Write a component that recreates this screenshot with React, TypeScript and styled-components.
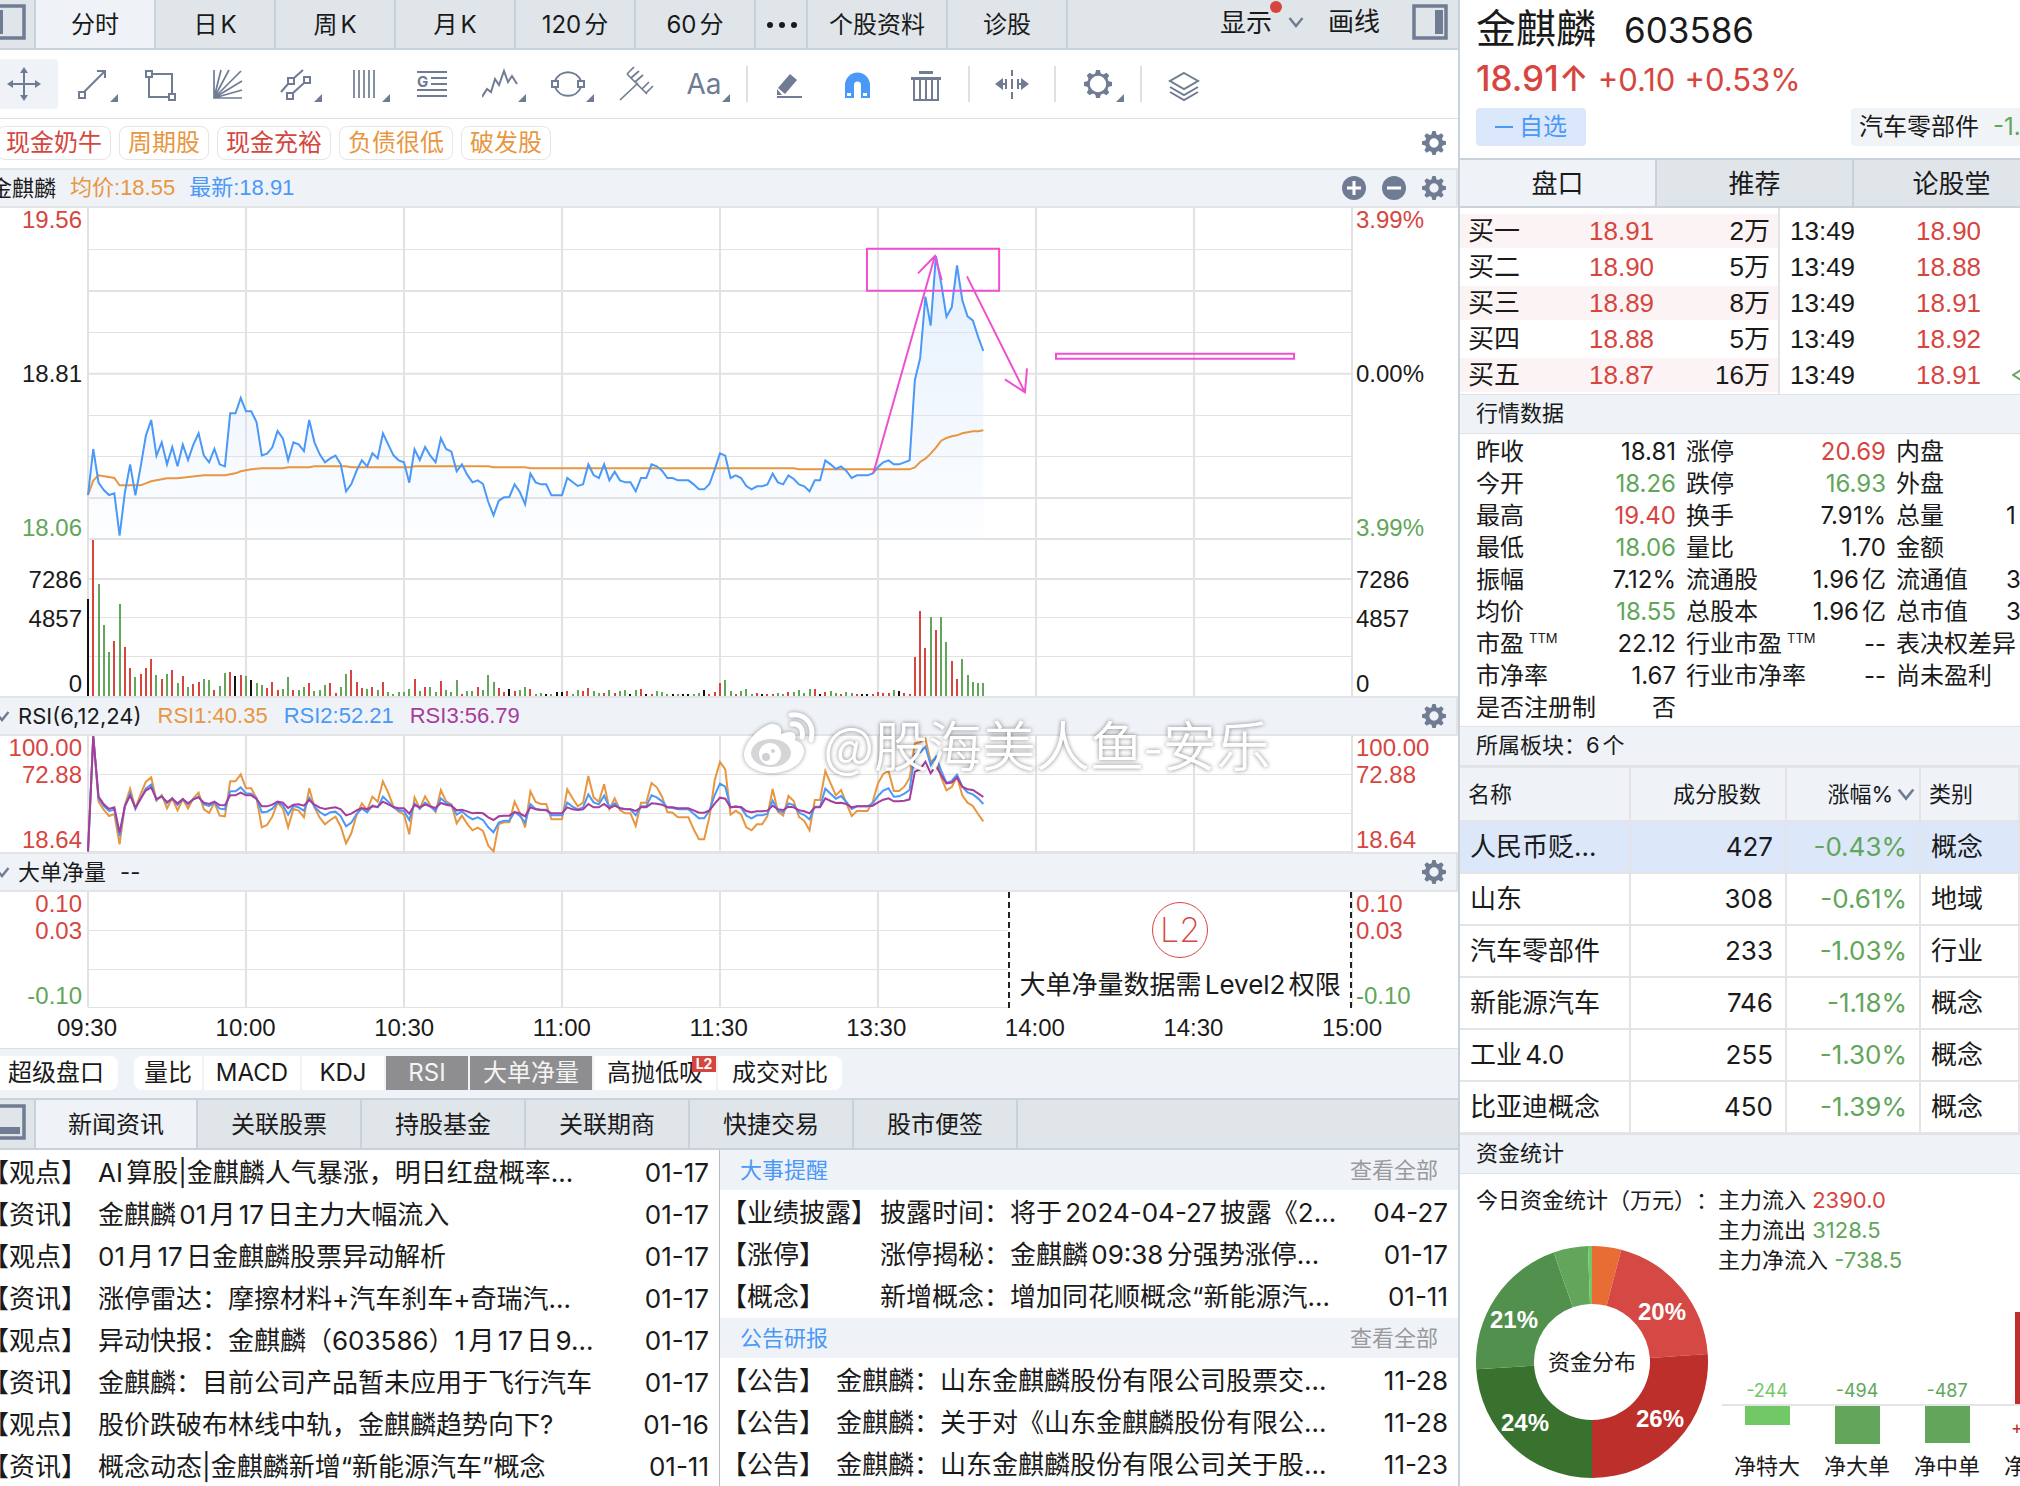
import React from "react";
import styled, { createGlobalStyle, css } from "styled-components";

const color = {
  ink: "#1a1a1a",
  red: "#d6463f",
  green: "#61a659",
  orange: "#e8963f",
  blue: "#4a98f7",
  purple: "#a63c9b",
  pink: "#f050cf",
  icon: "#6f7c93",
  bar: "#e0e5ea",
  active: "#eff3f7",
  strip: "#eff3f8",
  edge: "#c9d1db",
  line: "#e4e4e6",
  grid: "#e2e2e2",
};

const ui = `Inter, "Noto Sans CJK SC", sans-serif`;
const numeric = `"Liberation Sans", "Noto Sans CJK SC", sans-serif`;

const GlobalStyle = createGlobalStyle`
  *, *::before, *::after { box-sizing: border-box; }
  body {
    margin: 0;
    background: #fff;
    color: ${color.ink};
    font: 24px/32px ${ui};
    text-autospace: normal;
    text-spacing-trim: space-all;
  }
  button { font: inherit; color: inherit; border: 0; margin: 0; padding: 0; background: none; cursor: pointer; }
  a { color: inherit; text-decoration: none; }
  p, h1, h2, ul, dl, dd { margin: 0; padding: 0; font-weight: 400; }
  ul { list-style: none; }
  svg { display: block; flex: none; }
`;

/* ---------- data ---------- */

const PRICE = [
  885, 747, 848, 870, 885, 880, 1007, 878, 793, 886, 800, 706, 660, 767, 727, 793, 741, 799, 734, 780, 734, 700, 767,
  787, 747, 793, 799, 640, 640, 594, 634, 634, 666, 766, 761, 742, 693, 715, 781, 727, 733, 753, 660, 727, 763, 787,
  775, 767, 793, 874, 852, 812, 781, 799, 760, 775, 700, 733, 766, 781, 787, 848, 748, 780, 741, 767, 787, 715, 747,
  755, 814, 793, 824, 847, 841, 852, 906, 946, 902, 892, 891, 853, 876, 913, 821, 847, 853, 853, 886, 886, 886, 834,
  846, 858, 853, 793, 825, 834, 793, 841, 815, 841, 847, 847, 874, 834, 834, 793, 799, 812, 834, 834, 841, 841, 841,
  853, 868, 868, 852, 808, 760, 767, 834, 826, 834, 858, 868, 859, 859, 853, 821, 847, 853, 826, 837, 853, 859, 874,
  841, 841, 781, 793, 807, 799, 813, 834, 826, 826, 826, 820, 801, 787, 781, 793, 793, 787, 781, 540, 475, 290, 377,
  168, 250, 350, 322, 196, 300, 349, 361, 410, 453,
];

const AVERAGE: [number, number][] = [
  [0, 885], [1, 842], [2, 826], [5, 834], [6, 856], [10, 856], [12, 844], [15, 835], [17, 835], [22, 826], [26, 826],
  [28, 820], [29, 814], [31, 808], [33, 805], [37, 805], [38, 802], [42, 802], [43, 799], [49, 799], [50, 802],
  [61, 802], [62, 799], [76, 799], [77, 802], [83, 802], [84, 805], [134, 805], [135, 808], [156, 808], [157, 802],
  [158, 786], [159, 776], [160, 761], [161, 743], [162, 722], [163, 714], [164, 709], [165, 706], [166, 700],
  [168, 694], [169, 694], [170, 691],
];

const VOLUME = (
  "K97 R156 G112 G71 G44 R55 G92 R49 R28 G19 R22 R28 R37 G21 R17 G22 R26 G13 R20 G9 R12 R14 G17 G16 R6 G10 G23 R24 " +
  "K20 R21 G20 K16 G13 G11 R8 R14 R6 G7 G19 R6 G6 G9 R13 G5 G6 G11 R13 R3 G9 G22 R26 R14 R8 G7 R9 G6 R14 G4 G2 G4 " +
  "G4 G7 R17 G5 R9 G9 G4 R15 G6 G4 G16 R2 G5 G5 R9 G6 G21 G14 R8 R4 K7 R5 G6 G9 R7 G2 G3 K2 G2 K4 K4 R5 G2 G6 R5 " +
  "R8 G5 G3 R3 G6 R3 G5 G6 K2 G6 R7 K2 R2 G5 G4 G2 K2 G2 K2 K2 G2 G3 K6 R2 R4 R13 G16 G5 R2 G5 G7 G2 R3 K2 R2 R2 " +
  "G3 G2 R4 G4 G6 G3 G7 R7 K2 R4 G5 G3 R2 G4 G3 R2 K2 K2 R2 R4 R3 R3 G6 K5 R3 R2 R39 R85 R48 G79 R66 G79 G54 R35 " +
  "R17 G37 G21 G14 G13 G13"
)
  .split(" ")
  .map((s) => ({ tone: s[0], size: Number(s.slice(1)) }));

const RSI_6 = [
  484, 140, 335, 360, 378, 372, 463, 345, 296, 355, 312, 275, 262, 332, 315, 355, 325, 361, 328, 355, 325, 308, 358,
  369, 338, 377, 379, 274, 274, 253, 295, 295, 325, 412, 405, 380, 338, 355, 412, 357, 362, 382, 295, 352, 383, 403,
  390, 380, 410, 460, 430, 375, 340, 360, 320, 335, 274, 308, 350, 365, 373, 433, 322, 355, 319, 346, 366, 300, 334,
  343, 400, 377, 402, 421, 413, 423, 467, 484, 402, 397, 397, 335, 369, 412, 304, 336, 342, 342, 388, 388, 388, 298,
  325, 349, 338, 258, 322, 335, 283, 357, 325, 360, 370, 370, 408, 338, 338, 279, 292, 320, 366, 368, 382, 382, 382,
  418, 448, 448, 380, 270, 216, 238, 374, 362, 373, 412, 421, 403, 403, 378, 297, 365, 377, 318, 333, 381, 393, 421,
  330, 330, 243, 280, 316, 300, 340, 378, 363, 363, 363, 335, 280, 252, 243, 303, 303, 290, 264, 160, 157, 146, 215,
  205, 262, 301, 291, 260, 316, 338, 348, 372, 394,
];

const RSI_12 = [
  484, 140, 325, 348, 363, 359, 438, 350, 310, 357, 325, 295, 284, 330, 318, 340, 325, 345, 328, 343, 327, 320, 343,
  348, 338, 356, 358, 304, 304, 292, 310, 311, 325, 367, 365, 356, 338, 345, 374, 348, 352, 362, 323, 350, 366, 376,
  367, 365, 379, 409, 398, 372, 356, 367, 346, 352, 320, 335, 352, 361, 363, 390, 340, 356, 338, 350, 362, 325, 339,
  345, 374, 364, 378, 388, 382, 390, 412, 427, 398, 392, 392, 366, 378, 398, 342, 357, 359, 359, 376, 376, 376, 338,
  350, 358, 352, 313, 337, 343, 317, 352, 340, 355, 358, 358, 376, 349, 349, 316, 322, 334, 352, 354, 358, 358, 358,
  371, 385, 385, 362, 315, 281, 290, 352, 349, 353, 377, 385, 376, 376, 371, 332, 362, 367, 340, 345, 368, 375, 388,
  350, 350, 296, 311, 326, 318, 336, 357, 349, 349, 349, 340, 318, 302, 295, 320, 319, 311, 300, 192, 187, 170, 225,
  200, 242, 279, 273, 254, 290, 307, 313, 325, 342,
];

const RSI_24 = [
  484, 138, 320, 343, 357, 352, 428, 348, 317, 353, 326, 301, 293, 327, 320, 336, 326, 340, 327, 340, 328, 322, 338,
  342, 335, 345, 346, 316, 316, 308, 316, 316, 327, 349, 349, 344, 335, 338, 354, 344, 343, 347, 330, 344, 353, 357,
  354, 352, 358, 376, 371, 361, 354, 358, 349, 351, 335, 343, 351, 355, 355, 371, 345, 352, 344, 349, 354, 339, 344,
  347, 361, 359, 364, 370, 368, 370, 382, 390, 379, 377, 377, 366, 370, 379, 352, 358, 360, 361, 370, 370, 370, 352,
  358, 360, 358, 342, 352, 352, 342, 355, 347, 355, 357, 358, 363, 352, 352, 340, 341, 344, 352, 352, 355, 355, 355,
  361, 368, 368, 361, 341, 323, 326, 352, 350, 351, 363, 367, 364, 364, 362, 347, 358, 360, 350, 352, 361, 364, 370,
  352, 352, 325, 333, 339, 338, 342, 352, 349, 349, 349, 347, 337, 329, 325, 334, 334, 332, 328, 245, 238, 215, 250,
  227, 256, 280, 278, 262, 290, 298, 300, 310, 321,
];

const path = (values: number[]) => values.map((y, x) => `${x},${y}`).join(" ");

/* ---------- icons ---------- */

const stroke = { fill: "none", stroke: "currentColor", strokeWidth: 2 } as const;

const Glyph = ({ children, size = 36 }: { children: React.ReactNode; size?: number }) => (
  <svg width={size} height={size} viewBox="0 0 36 36" aria-hidden="true">
    {children}
  </svg>
);

const Gear = ({ light, size = 24 }: { light?: boolean; size?: number }) => (
  <svg width={size} height={size} viewBox="-14 -14 28 28" aria-hidden="true">
    {[0, 45, 90, 135, 180, 225, 270, 315].map((a) => (
      <path key={a} d="M-3.2 -9 L-1.9 -14 H1.9 L3.2 -9Z" fill="currentColor" transform={`rotate(${a})`} />
    ))}
    <circle r={light ? 9.5 : 8} fill="none" stroke="currentColor" strokeWidth={light ? 2.6 : 5.2} />
  </svg>
);

const Chevron = ({ width = 16 }: { width?: number }) => (
  <svg width={width} height={width} viewBox="0 0 16 16" aria-hidden="true">
    <path d="M1.5 4 8 12 14.5 4" fill="none" stroke={color.icon} strokeWidth="2.4" />
  </svg>
);

const PanelIcon = ({ side }: { side: "left" | "right" | "bottom" }) => (
  <Glyph>
    <rect x="2" y="2" width="32" height="32" fill="none" stroke={color.icon} strokeWidth="3.5" />
    {side === "left" && <rect x="6" y="6" width="7" height="24" fill={color.icon} />}
    {side === "right" && <rect x="23" y="6" width="8" height="24" fill={color.icon} />}
    {side === "bottom" && <rect x="6" y="23" width="24" height="7" fill={color.icon} />}
  </Glyph>
);

const RoundSign = ({ plus }: { plus?: boolean }) => (
  <svg width="24" height="24" viewBox="0 0 24 24" aria-hidden="true">
    <circle cx="12" cy="12" r="12" fill={color.icon} />
    <path d={plus ? "M5 12h14M12 5v14" : "M5 12h14"} stroke="#fff" strokeWidth="3" />
  </svg>
);

const tools: Record<string, React.ReactNode> = {
  move: (
    <>
      <path d="M4 18h28M18 4v28" {...stroke} />
      <path d="M18 1l4 6h-8zM18 35l4-6h-8zM1 18l6-4v8zM35 18l-6-4v8z" fill="currentColor" />
    </>
  ),
  trend: <path d="M5 26h6v6H5zM10 26 31 5M23 5h8v7" {...stroke} />,
  box: <path d="M4 5h6v6H4zM27 28h6v6h-6zM10 8h20v20M7 11v20h20" {...stroke} />,
  fan: <path d="M4 4v28h28M4 32 11 4M4 32 19 4M4 32 31 5M4 32 32 15M4 32l28-8" {...stroke} strokeWidth={1.7} />,
  channel: <path d="M3 26l7-8M16 12l9-8M10 12h6v6h-6zM26 11h6v6h-6zM9 27h6v6H9zM15 27l11-10" {...stroke} />,
  columns: <path d="M8 4v28M13 4v28M18 4v28M23 4v28M28 4v28" {...stroke} strokeWidth={1.7} />,
  notes: (
    <>
      <path d="M3 6h30M17 12h16M17 18h16M3 24h30M3 30h30" {...stroke} />
      <text x="3" y="21" fontSize="15" fontWeight="700" fontFamily="Inter" fill="currentColor">
        G
      </text>
    </>
  ),
  wave: <path d="M0 31l5-8 4 3 4-13 4 6 5-14 4 11 4-6 5 8" {...stroke} />,
  ellipse: (
    <path d="M5 15a14 14 0 0 1 26 0M5 21a14 14 0 0 0 26 0M2 15h6v6H2zM28 15h6v6h-6z" {...stroke} />
  ),
  fork: <path d="M2 34 20 17M9 8l20 20M9 8l7-7M13 12l8-7M17 16l8-7M24 23l7-7M28 27l7-7" {...stroke} strokeWidth={1.7} />,
  pen: (
    <>
      <path d="M18 8l7 6-12 14-7-6zM5 23l5 6H5z" fill="currentColor" />
      <path d="M5 31h25" {...stroke} />
    </>
  ),
  magnet: (
    <>
      <path d="M5 32V19a12.500 12.500 0 0 1 25 0v13h-9V19a3.500 3.500 0 0 0-7 0v13z" fill={color.blue} />
      <path d="M7 27h4v3H7zM23 27h4v3h-4z" fill="#fff" />
    </>
  ),
  trash: (
    <>
      <path d="M11 5h14v3H11zM3 11h30v3H3z" fill="currentColor" />
      <path d="M6 14v20h24V14M12 14v20M18 14v20M24 14v20" {...stroke} />
    </>
  ),
  align: (
    <>
      <path d="M18 4v6M18 13v10M18 26v7M8 18h5M23 18h5M12 13v10M24 13v10" {...stroke} />
      <path d="M1 18l8-6v12zM35 18l-8-6v12z" fill="currentColor" />
    </>
  ),
  layers: <path d="M18 7l14 8-14 8-14-8zM4 21l14 8 14-8M4 26l14 8 14-8" {...stroke} />,
};

const WeiboMark = () => (
  <svg width="72" height="62" viewBox="0 0 72 62" aria-hidden="true">
    <path
      d="M30 12c-6-3-30 15-30 31 0 12 14 18 28 18 18 0 32-10 32-22 0-7-6-10-9-11 2-6-1-11-14-6 1-5-1-9-7-10z"
      fill="#fff"
    />
    <ellipse cx="27" cy="41" rx="20" ry="14" fill="#d5d5d8" />
    <circle cx="26" cy="42" r="11" fill="#fff" />
    <circle cx="22" cy="45" r="4" fill="#d0d0d4" />
    <circle cx="29" cy="39" r="2" fill="#d0d0d4" />
    <path d="M47 3c14-2 24 9 20 25M48 12c7-1 12 5 10 13" fill="none" stroke="#fff" strokeWidth="5" strokeLinecap="round" />
  </svg>
);

/* ---------- shell ---------- */

const Shell = styled.div`
  display: grid;
  grid-template-columns: minmax(0, 73fr) minmax(0, 28fr);
  grid-template-rows: minmax(0, 1fr);
  height: 100vh;
  overflow: hidden;
`;

const Main = styled.main`
  display: flex;
  flex-direction: column;
  overflow: hidden;
  border-right: 2px solid ${color.edge};
`;

const Side = styled.aside`
  display: flex;
  flex-direction: column;
  overflow: hidden;
`;

const TabBar = styled.nav<{ $top?: boolean }>`
  display: flex;
  flex: none;
  overflow: hidden;
  background: ${color.bar};
  border-bottom: 2px solid ${color.edge};
  ${(p) => p.$top && `border-top: 2px solid ${color.edge};`}
`;

const Tab = styled.button<{ $width: number; $active?: boolean; $large?: boolean }>`
  flex: none;
  width: ${(p) => p.$width}px;
  height: ${(p) => (p.$large ? 46 : 48)}px;
  padding-top: 2px;
  font-size: ${(p) => (p.$large ? 26 : 24)}px;
  border-right: 2px solid ${color.edge};
  background: ${(p) => (p.$active ? color.active : "transparent")};
  white-space: nowrap;
`;

const PanelToggle = styled.button`
  display: flex;
  align-items: center;
  justify-content: flex-end;
  flex: none;
  width: 36px;
  height: 48px;
  padding-right: 8px;
  padding-bottom: 4px;
  border-right: 2px solid ${color.edge};
`;

const BarActions = styled.div`
  display: flex;
  align-items: center;
  margin-left: auto;
  padding: 0 10px 4px 0;
  font-size: 26px;

  > * + * {
    margin-left: 24px;
  }
  > :last-child {
    margin-left: 32px;
  }
`;

const DisplayMenu = styled.button`
  display: flex;
  align-items: center;
  gap: 16px;
  position: relative;

  &::after {
    content: "";
    position: absolute;
    left: 50px;
    top: -4px;
    width: 12px;
    height: 12px;
    border-radius: 50%;
    background: ${color.red};
  }
`;

const BarLabel = styled.span`
  padding-top: 2px;
`;

/* ---------- tools ---------- */

const ToolRow = styled.div`
  display: flex;
  align-items: center;
  flex: none;
  height: 69px;
  margin-left: -10px;
  border-bottom: 1px solid #e0e0e0;
`;

const Tool = styled.button<{ $on?: boolean; $more?: boolean }>`
  display: flex;
  align-items: center;
  justify-content: center;
  flex: none;
  position: relative;
  width: 68px;
  height: 50px;
  border-radius: 4px;
  color: ${color.icon};
  font-size: 28px;
  background: ${(p) => (p.$on ? color.active : "transparent")};
  ${(p) =>
    p.$more &&
    css`
      &::after {
        content: "";
        position: absolute;
        right: 8px;
        bottom: 7px;
        border: 4px solid transparent;
        border-right-color: ${color.icon};
        border-bottom-color: ${color.icon};
      }
    `}
`;

const ToolDivider = styled.span`
  flex: none;
  width: 2px;
  height: 36px;
  margin: 0 8px;
  background: #e0e0e0;
`;

const TagRow = styled.div`
  display: flex;
  align-items: center;
  gap: 8px;
  flex: none;
  height: 51px;
  padding: 0 12px 2px 0;
  border-bottom: 2px solid #e5e5e5;
`;

const Tag = styled.a<{ $tone: string }>`
  flex: none;
  height: 34px;
  padding: 0 8px;
  border: 1px solid #e6e6e6;
  border-radius: 8px;
  line-height: 32px;
  color: ${(p) => p.$tone};

  &:first-child {
    margin-left: -3px;
  }
`;

const IconButton = styled.button`
  display: flex;
  flex: none;
  color: ${color.icon};
`;

const Push = styled.div`
  display: flex;
  gap: 16px;
  margin-left: auto;
`;

/* ---------- charts ---------- */

const PaneHeader = styled.header<{ $inset: number; $gap: number }>`
  display: flex;
  align-items: center;
  gap: ${(p) => p.$gap}px;
  flex: none;
  height: 38px;
  padding: 0 10px 0 0;
  background: ${color.strip};
  border-bottom: 2px solid #e3e4e6;
  border-right: 2px solid #e3e4e6;
  font-size: 22px;
  line-height: 32px;
  white-space: nowrap;

  > :first-child {
    margin-left: ${(p) => p.$inset}px;
  }
`;

const PaneTitle = styled.span`
  display: flex;
  align-items: center;
  gap: 8px;
`;

const Reading = styled.span<{ $tone: string }>`
  font-family: ${numeric};
  text-autospace: no-autospace;
  color: ${(p) => p.$tone};
`;

const Pane = styled.section<{ $height: number; $line?: boolean }>`
  display: grid;
  grid-template-columns: 88px minmax(0, 1fr) 106px;
  grid-template-rows: minmax(0, 1fr);
  flex: none;
  height: ${(p) => p.$height}px;
  ${(p) => p.$line && "border-bottom: 2px solid #e3e4e6;"}
`;

const PaneGroup = styled.div`
  flex: none;
  position: relative;
`;

const Plot = styled.div`
  position: relative;
  min-width: 0;
  min-height: 0;

  > svg {
    width: 100%;
    height: 100%;
    overflow: visible;
  }
`;

const Axis = styled.div<{ $end?: boolean }>`
  display: flex;
  flex-direction: column;
  padding: ${(p) => (p.$end ? "0 0 0 4px" : "0 6px 0 0")};
  text-align: ${(p) => (p.$end ? "left" : "right")};
  font: 24px/24px ${numeric};
`;

const Scale = styled.div<{ $kind: "price" | "volume" | "sub" }>`
  display: flex;
  flex-direction: column;
  ${(p) => p.$kind === "price" && "height: 332px; justify-content: space-between;"}
  ${(p) => p.$kind === "volume" && "flex: 1; padding-top: 28px; gap: 15px;"}
  ${(p) => p.$kind === "sub" && "flex: 1; gap: 3px;"}

  > :last-child {
    margin-top: ${(p) => (p.$kind === "price" ? "0" : "auto")};
  }
`;

const Mark = styled.span<{ $tone?: string }>`
  color: ${(p) => p.$tone ?? color.ink};
`;

const TimeAxis = styled.div`
  display: flex;
  align-items: center;
  justify-content: space-between;
  flex: none;
  height: 41px;
  padding: 0 76px 0 57px;
  border-bottom: 1px solid #e0e0e0;
  font: 24px/40px ${numeric};
`;

const LockedArea = styled.div`
  position: absolute;
  top: 0;
  right: 0;
  bottom: 0;
  display: flex;
  flex-direction: column;
  align-items: center;
  gap: 10px;
  width: 27.2%;
  padding-top: 10px;
  background: #fff;
  border-left: 2px dashed #222;
  border-right: 2px dashed #222;
  font-size: 26px;
  line-height: 34px;
  white-space: nowrap;
`;

const LevelMark = styled.span`
  width: 56px;
  height: 56px;
  border: 1px solid ${color.red};
  border-radius: 50%;
  color: ${color.red};
  font-size: 34px;
  font-weight: 200;
  line-height: 54px;
  text-align: center;
`;

const Watermark = styled.div`
  position: absolute;
  left: 51%;
  top: 14px;
  display: flex;
  gap: 8px;
  color: #fff;
  font: 350 54px/64px "Noto Sans CJK SC", sans-serif;
  white-space: nowrap;
  text-shadow: 0 0 4px rgba(0, 0, 0, 0.5);
  pointer-events: none;

  svg {
    filter: drop-shadow(0 0 2px rgba(0, 0, 0, 0.4));
  }
`;

const IndicatorBar = styled.div`
  display: flex;
  gap: 2px;
  flex: none;
  height: 49px;
  padding-top: 7px;
  background: ${color.strip};
`;

const Indicator = styled.button<{ $width: number; $on?: boolean; $first?: boolean; $last?: boolean }>`
  flex: none;
  position: relative;
  width: ${(p) => p.$width}px;
  height: 34px;
  line-height: 34px;
  color: ${(p) => (p.$on ? "#f4f4f4" : color.ink)};
  background: ${(p) => (p.$on ? "#8e8e91" : "#fff")};
  border-radius: ${(p) => `${p.$first ? 8 : 0}px ${p.$last ? 8 : 0}px ${p.$last ? 8 : 0}px ${p.$first ? 8 : 0}px`};

  &:first-child {
    margin: 0 14px 0 -6px;
  }
`;

const Badge = styled.span`
  position: absolute;
  top: 0;
  right: 0;
  width: 24px;
  height: 16px;
  background: ${color.red};
  color: #fff;
  font-size: 14px;
  font-weight: 700;
  line-height: 16px;
`;

/* ---------- news ---------- */

const News = styled.div`
  display: grid;
  grid-template-columns: minmax(0, 360fr) minmax(0, 369fr);
  flex: 1;
  min-height: 0;
  overflow: hidden;
`;

const NewsColumn = styled.section<{ $ruled?: boolean }>`
  overflow: hidden;
  ${(p) => p.$ruled && "border-right: 1px solid #b9bcc2;"}
`;

const NewsList = styled.ul<{ $inset: number; $label: number }>`
  padding: 2px 10px 0 0;
  margin-left: ${(p) => p.$inset}px;
  font-size: 26px;
  line-height: 42px;

  a {
    display: grid;
    grid-template-columns: ${(p) => p.$label}px minmax(0, 1fr) auto;
    white-space: nowrap;
  }
`;

const NewsHead = styled.header`
  display: flex;
  justify-content: space-between;
  height: 40px;
  padding: 0 20px;
  background: ${color.strip};
  font-size: 22px;
  line-height: 40px;

  h2 {
    font-size: 22px;
    color: ${color.blue};
  }

  a {
    color: #9a9a9c;
  }
`;

/* ---------- side panel ---------- */

const Quote = styled.header`
  flex: none;
  height: 160px;
  padding-left: 16px;
  overflow: hidden;
  border-bottom: 2px solid ${color.edge};
  white-space: nowrap;
`;

const QuoteName = styled.h1`
  display: flex;
  align-items: baseline;
  gap: 28px;
  height: 56px;
  font-size: 40px;
  line-height: 58px;

  span {
    font-size: 35px;
  }
`;

const QuotePrice = styled.p`
  display: flex;
  align-items: baseline;
  gap: 9px;
  height: 52px;
  color: ${color.red};
  font-size: 31px;
  line-height: 44px;

  strong {
    font-size: 35px;
    font-weight: 450;
  }
`;

const QuoteActions = styled.div`
  display: flex;
  justify-content: space-between;
`;

const WatchButton = styled.button`
  display: flex;
  align-items: center;
  justify-content: center;
  gap: 6px;
  width: 110px;
  height: 38px;
  border-radius: 4px;
  background: #dbe8fb;
  color: ${color.blue};
`;

const Sector = styled.a`
  display: flex;
  gap: 14px;
  width: 169px;
  height: 38px;
  padding-left: 8px;
  overflow: hidden;
  border-radius: 4px 0 0 4px;
  background: #f1f4f7;
  line-height: 38px;

  span {
    color: ${color.green};
  }
`;

const Orders = styled.section`
  display: grid;
  grid-template-columns: 318px minmax(0, 1fr);
  flex: none;
  font: 26px/34px ${numeric};
  text-autospace: no-autospace;
`;

const OrderTable = styled.table<{ $tint?: boolean }>`
  width: 100%;
  margin-top: 6px;
  border-collapse: collapse;
  table-layout: fixed;

  td {
    height: 36px;
    padding: 0 0 2px;
    overflow: hidden;
    white-space: nowrap;
  }

  ${(p) =>
    p.$tint &&
    css`
      tr:nth-child(odd) {
        background: linear-gradient(#fcf4f4 34px, #fff 34px);
      }
      td:first-child {
        padding-left: 8px;
      }
      td:last-child {
        padding-right: 8px;
        text-align: right;
      }
    `}
`;

const Trades = styled.div`
  display: flex;
  padding-left: 10px;
  border-left: 2px solid ${color.line};
`;

const Rise = styled.span`
  color: ${color.red};
`;

const SectionTitle = styled.h2`
  flex: none;
  height: 40px;
  padding-left: 16px;
  background: ${color.strip};
  border-top: 1px solid #dfe2e6;
  border-bottom: 1px solid #dfe2e6;
  font-size: 22px;
  line-height: 36px;
`;

const Stats = styled.dl`
  display: grid;
  grid-template-columns: repeat(3, 200px);
  gap: 0 10px;
  flex: none;
  height: 292px;
  padding: 2px 0 2px 16px;
  overflow: hidden;
  white-space: nowrap;
`;

const Stat = styled.div<{ $clipped?: boolean }>`
  display: flex;
  justify-content: ${(p) => (p.$clipped ? "flex-start" : "space-between")};
  height: 32px;

  dt {
    min-width: ${(p) => (p.$clipped ? 110 : 0)}px;
  }

  sup {
    margin-left: 2px;
    font-size: 13px;
    line-height: 13px;
    vertical-align: 9px;
  }
`;

const StatValue = styled.dd<{ $tone?: string }>`
  color: ${(p) => p.$tone ?? color.ink};
`;

const Boards = styled.table`
  flex: none;
  border-collapse: collapse;
  table-layout: fixed;
  width: 100%;
  border-top: 2px solid ${color.line};
  font-size: 26px;

  th {
    height: 54px;
    padding: 0 8px;
    background: ${color.strip};
    border-bottom: 2px solid ${color.line};
    border-right: 2px solid ${color.line};
    font-size: 22px;
    font-weight: 400;
    text-align: left;
  }
  th:nth-child(2) {
    padding-right: 24px;
    text-align: right;
  }
  th:nth-child(3) {
    padding-right: 4px;
  }
  td {
    height: 52px;
    padding: 0 10px;
    border-bottom: 2px solid ${color.line};
    border-right: 2px solid ${color.line};
    white-space: nowrap;
  }
  td:nth-child(2),
  td:nth-child(3) {
    padding-right: 12px;
    text-align: right;
  }
  td:nth-child(3) {
    color: ${color.green};
  }
  tbody tr:first-child {
    background: #dce8fa;
  }
`;

const SortButton = styled.button`
  display: flex;
  align-items: center;
  justify-content: flex-end;
  gap: 4px;
  width: 100%;
`;

const Funds = styled.section`
  flex: none;
  padding: 11px 0 0 16px;
  overflow: hidden;
  font-size: 22px;
  line-height: 30px;
  white-space: nowrap;
`;

const FundGrid = styled.div`
  display: grid;
  grid-template-columns: 242px minmax(0, 1fr);

  > svg {
    margin-top: 31px;
  }
`;

const FundValue = styled.span<{ $tone: string }>`
  color: ${(p) => p.$tone};
`;

const FlowChart = styled.div`
  display: flex;
  margin-left: 4px;
  overflow: hidden;
`;

const FlowColumn = styled.div`
  flex: none;
  width: 90px;
  text-align: center;
`;

const FlowHalf = styled.div<{ $upper?: boolean; $tone: string }>`
  display: flex;
  flex-direction: column;
  align-items: center;
  justify-content: ${(p) => (p.$upper ? "flex-end" : "flex-start")};
  height: ${(p) => (p.$upper ? 131 : 45)}px;
  border-bottom: ${(p) => (p.$upper ? `2px solid ${color.line}` : "0")};
  color: ${(p) => p.$tone};
  font-size: 18px;
  line-height: 26px;
`;

const FlowBar = styled.span<{ $tone: string }>`
  width: 45px;
  background: ${(p) => p.$tone};
`;

const FlowNumber = styled.span<{ $below?: boolean }>`
  margin-top: ${(p) => (p.$below ? 10 : 0)}px;
`;

/* ---------- pieces ---------- */

const thin = { vectorEffect: "non-scaling-stroke" } as const;
const barTone: Record<string, string> = { K: "#111", R: color.red, G: color.green };

const GridLines = ({ rows, top, bottom }: { rows: number[]; top: number; bottom: number }) => (
  <g stroke={color.grid} strokeWidth="1.5" shapeRendering="crispEdges">
    {rows.map((y) => (
      <path key={y} d={`M0 ${y}H240`} {...thin} />
    ))}
    {[0, 30, 60, 90, 120, 150, 180, 210, 240].map((x) => (
      <path key={x} d={`M${x} ${top}V${bottom}`} {...thin} />
    ))}
  </g>
);

const PriceChart = () => (
  <svg viewBox="0 24 240 1464" preserveAspectRatio="none" role="img" aria-label="分时走势">
    <defs>
      <linearGradient id="fall" x1="0" y1="0" x2="0" y2="1">
        <stop offset="0" stopColor="#4a98f7" stopOpacity="0.15" />
        <stop offset="1" stopColor="#4a98f7" stopOpacity="0.01" />
      </linearGradient>
    </defs>
    <polygon points={`0,1017 ${path(PRICE)} 170,1017`} fill="url(#fall)" />
    <GridLines rows={[148, 273, 397, 646, 769, 894, 1017, 1137, 1252, 1369]} top={24} bottom={1488} />
    <path d="M0 521H240" stroke={color.grid} strokeWidth="2" {...thin} />
    <g strokeWidth="2" shapeRendering="crispEdges">
      {VOLUME.map((v, i) => (
        <path key={i} d={`M${i} 1488V${1488 - v.size * 3}`} stroke={barTone[v.tone]} {...thin} />
      ))}
    </g>
    <g fill="none" strokeWidth="2">
      <polyline points={AVERAGE.map((p) => p.join(",")).join(" ")} stroke={color.orange} {...thin} />
      <polyline points={path(PRICE)} stroke={color.blue} {...thin} />
      <g stroke={color.pink}>
        <path d="M147.900 146H173V272H147.900Z" {...thin} />
        <path d="M149.100 820 160.800 168M157.600 220 160.800 168 162.100 240" {...thin} />
        <path d="M166.900 229 177.900 577M174.100 538 177.900 577 178.300 505" {...thin} />
        <path d="M183.800 461H229V476H183.800Z" {...thin} />
      </g>
    </g>
  </svg>
);

const RsiChart = () => (
  <svg viewBox="0 138 240 348" preserveAspectRatio="none" role="img" aria-label="RSI">
    <GridLines rows={[253, 370, 484]} top={138} bottom={486} />
    <g fill="none" strokeWidth="2">
      <polyline points={path(RSI_6)} stroke={color.orange} {...thin} />
      <polyline points={path(RSI_12)} stroke={color.blue} {...thin} />
      <polyline points={path(RSI_24)} stroke={color.purple} {...thin} />
    </g>
  </svg>
);

const PriceAxis = ({ end }: { end?: boolean }) => (
  <Axis $end={end}>
    <Scale $kind="price">
      <Mark $tone={color.red}>{end ? "3.99%" : "19.56"}</Mark>
      <Mark>{end ? "0.00%" : "18.81"}</Mark>
      <Mark $tone={color.green}>{end ? "3.99%" : "18.06"}</Mark>
    </Scale>
    <Scale $kind="volume">
      <Mark>7286</Mark>
      <Mark>4857</Mark>
      <Mark>0</Mark>
    </Scale>
  </Axis>
);

const SubAxis = ({ end, marks, low }: { end?: boolean; marks: string[]; low: string }) => (
  <Axis $end={end}>
    <Scale $kind="sub">
      {marks.map((m, i) => (
        <Mark key={m} $tone={i === 2 ? low : color.red}>
          {m}
        </Mark>
      ))}
    </Scale>
  </Axis>
);

const SettingsButton = () => (
  <IconButton aria-label="设置">
    <Gear />
  </IconButton>
);

const slices: [number, number, string][] = [
  [0, 14.6, "#e86d35"],
  [14.6, 86, "#d54843"],
  [86, 180, "#bc2f2a"],
  [180, 266.4, "#38722e"],
  [266.4, 340.7, "#52914d"],
  [340.7, 358, "#62a65c"],
  [358, 360, "#72c866"],
];

const arc = (from: number, to: number) => {
  const at = (deg: number, r: number) => {
    const a = (deg * Math.PI) / 180;
    return `${(r * Math.sin(a)).toFixed(2)} ${(-r * Math.cos(a)).toFixed(2)}`;
  };
  return `M${at(from, 116)}A116 116 0 0 1 ${at(to, 116)}L${at(to, 58)}A58 58 0 0 0 ${at(from, 58)}Z`;
};

const Donut = () => (
  <svg width="232" height="232" viewBox="-116 -116 232 232" role="img" aria-label="资金分布">
    {slices.map(([from, to, fill]) => (
      <path key={from} d={arc(from, to)} fill={fill} />
    ))}
    <g fill="#fff" fontFamily="Liberation Sans" fontSize="24" fontWeight="700" textAnchor="middle">
      <text x="70" y="-42">20%</text>
      <text x="68" y="65">26%</text>
      <text x="-67" y="69">24%</text>
      <text x="-78" y="-34">21%</text>
    </g>
    <text y="8" fontSize="22" textAnchor="middle" fill={color.ink}>
      资金分布
    </text>
  </svg>
);

const flows = [
  { label: "净特大", value: "-244", size: 19, text: "#72c866", tone: "#72c866" },
  { label: "净大单", value: "-494", size: 38, text: color.green, tone: "#62a65c" },
  { label: "净中单", value: "-487", size: 37, text: color.green, tone: "#62a65c" },
  { label: "净小单", value: "+1225", size: 92, text: "#bc2f2a", tone: "#bc2f2a" },
];

const Flow = ({ label, value, size, text, tone }: (typeof flows)[number]) => {
  const bar = <FlowBar $tone={tone} style={{ height: size }} />;
  const up = value.startsWith("+");
  return (
    <FlowColumn>
      <FlowHalf $upper $tone={text}>
        {up ? bar : <FlowNumber>{value}</FlowNumber>}
      </FlowHalf>
      <FlowHalf $tone={text}>{up ? <FlowNumber $below>{value}</FlowNumber> : bar}</FlowHalf>
      {label}
    </FlowColumn>
  );
};

/* ---------- page content ---------- */

const toolbar: { id: string; more?: boolean }[] = [
  { id: "move" },
  { id: "trend", more: true },
  { id: "box" },
  { id: "fan" },
  { id: "channel", more: true },
  { id: "columns", more: true },
  { id: "notes" },
  { id: "wave", more: true },
  { id: "ellipse", more: true },
  { id: "fork" },
];

const tags: [string, string][] = [
  ["现金奶牛", color.red],
  ["周期股", color.orange],
  ["现金充裕", color.red],
  ["负债很低", color.orange],
  ["破发股", color.orange],
];

const latest = [
  ["【观点】", "AI算股|金麒麟人气暴涨，明日红盘概率...", "01-17"],
  ["【资讯】", "金麒麟01月17日主力大幅流入", "01-17"],
  ["【观点】", "01月17日金麒麟股票异动解析", "01-17"],
  ["【资讯】", "涨停雷达：摩擦材料+汽车刹车+奇瑞汽...", "01-17"],
  ["【观点】", "异动快报：金麒麟（603586）1月17日9...", "01-17"],
  ["【资讯】", "金麒麟：目前公司产品暂未应用于飞行汽车", "01-17"],
  ["【观点】", "股价跌破布林线中轨，金麒麟趋势向下?", "01-16"],
  ["【资讯】", "概念动态|金麒麟新增“新能源汽车”概念", "01-11"],
];

const events = [
  ["【业绩披露】", "披露时间：将于2024-04-27披露《2...", "04-27"],
  ["【涨停】", "涨停揭秘：金麒麟09:38分强势涨停...", "01-17"],
  ["【概念】", "新增概念：增加同花顺概念“新能源汽...", "01-11"],
];

const notices = [
  ["【公告】", "金麒麟：山东金麒麟股份有限公司股票交...", "11-28"],
  ["【公告】", "金麒麟：关于对《山东金麒麟股份有限公...", "11-28"],
  ["【公告】", "金麒麟：山东金麒麟股份有限公司关于股...", "11-23"],
];

const NewsItems = ({ items, inset, label }: { items: string[][]; inset: number; label: number }) => (
  <NewsList $inset={inset} $label={label}>
    {items.map(([kind, title, date]) => (
      <li key={title}>
        <a href="#news">
          <span>{kind}</span>
          <span>{title}</span>
          <time>{date}</time>
        </a>
      </li>
    ))}
  </NewsList>
);

const bids = [
  ["买一", "18.91", "2万"],
  ["买二", "18.90", "5万"],
  ["买三", "18.89", "8万"],
  ["买四", "18.88", "5万"],
  ["买五", "18.87", "16万"],
];

const trades = ["18.90", "18.88", "18.91", "18.92", "18.91"];

const stats: [string, string, string?][] = [
  ["昨收", "18.81"], ["涨停", "20.69", color.red], ["内盘", ""],
  ["今开", "18.26", color.green], ["跌停", "16.93", color.green], ["外盘", ""],
  ["最高", "19.40", color.red], ["换手", "7.91%"], ["总量", "1"],
  ["最低", "18.06", color.green], ["量比", "1.70"], ["金额", ""],
  ["振幅", "7.12%"], ["流通股", "1.96亿"], ["流通值", "3"],
  ["均价", "18.55", color.green], ["总股本", "1.96亿"], ["总市值", "3"],
  ["市盈TTM", "22.12"], ["行业市盈TTM", "--"], ["表决权差异", ""],
  ["市净率", "1.67"], ["行业市净率", "--"], ["尚未盈利", ""],
  ["是否注册制", "否"],
];

const boards = [
  ["人民币贬...", "427", "-0.43%", "概念"],
  ["山东", "308", "-0.61%", "地域"],
  ["汽车零部件", "233", "-1.03%", "行业"],
  ["新能源汽车", "746", "-1.18%", "概念"],
  ["工业4.0", "255", "-1.30%", "概念"],
  ["比亚迪概念", "450", "-1.39%", "概念"],
];

export default function App() {
  return (
    <Shell>
      <GlobalStyle />
      <Main>
        <TabBar>
          <PanelToggle aria-label="左侧栏">
            <PanelIcon side="left" />
          </PanelToggle>
          <Tab $width={120} $active>分时</Tab>
          <Tab $width={120}>日K</Tab>
          <Tab $width={120}>周K</Tab>
          <Tab $width={120}>月K</Tab>
          <Tab $width={120}>120分</Tab>
          <Tab $width={120}>60分</Tab>
          <Tab $width={52} aria-label="更多周期">
            <svg width="50" height="8" viewBox="0 0 50 8" aria-hidden="true">
              <g fill={color.ink}>
                <circle cx="14" cy="4" r="3" />
                <circle cx="26" cy="4" r="3" />
                <circle cx="38" cy="4" r="3" />
              </g>
            </svg>
          </Tab>
          <Tab $width={140}>个股资料</Tab>
          <Tab $width={120}>诊股</Tab>
          <BarActions>
            <DisplayMenu>
              <BarLabel>显示</BarLabel>
              <Chevron />
            </DisplayMenu>
            <button>
              <BarLabel>画线</BarLabel>
            </button>
            <IconButton aria-label="右侧栏">
              <PanelIcon side="right" />
            </IconButton>
          </BarActions>
        </TabBar>

        <ToolRow>
          {toolbar.map((t) => (
            <Tool key={t.id} $on={t.id === "move"} $more={t.more} aria-label={t.id}>
              <Glyph>{tools[t.id]}</Glyph>
            </Tool>
          ))}
          <Tool $more>Aa</Tool>
          <ToolDivider />
          {["pen", "magnet", "trash"].map((id) => (
            <Tool key={id} aria-label={id}>
              <Glyph>{tools[id]}</Glyph>
            </Tool>
          ))}
          <ToolDivider />
          <Tool aria-label="align">
            <Glyph>{tools.align}</Glyph>
          </Tool>
          <ToolDivider />
          <Tool $more aria-label="settings">
            <Gear light size={28} />
          </Tool>
          <ToolDivider />
          <Tool aria-label="layers">
            <Glyph>{tools.layers}</Glyph>
          </Tool>
        </ToolRow>

        <TagRow>
          {tags.map(([name, tone]) => (
            <Tag key={name} href="#tag" $tone={tone}>
              {name}
            </Tag>
          ))}
          <Push>
            <SettingsButton />
          </Push>
        </TagRow>

        <PaneHeader $inset={-10} $gap={14}>
          <span>金麒麟</span>
          <Reading $tone={color.orange}>均价:18.55</Reading>
          <Reading $tone={color.blue}>最新:18.91</Reading>
          <Push>
            <IconButton aria-label="放大">
              <RoundSign plus />
            </IconButton>
            <IconButton aria-label="缩小">
              <RoundSign />
            </IconButton>
            <SettingsButton />
          </Push>
        </PaneHeader>
        <Pane $height={490} $line>
          <PriceAxis />
          <Plot>
            <PriceChart />
          </Plot>
          <PriceAxis end />
        </Pane>

        <PaneGroup>
          <PaneHeader $inset={-6} $gap={16}>
            <PaneTitle>
              <Chevron />
              RSI(6,12,24)
            </PaneTitle>
            <Reading $tone={color.orange}>RSI1:40.35</Reading>
            <Reading $tone={color.blue}>RSI2:52.21</Reading>
            <Reading $tone={color.purple}>RSI3:56.79</Reading>
            <Push>
              <SettingsButton />
            </Push>
          </PaneHeader>
          <Pane $height={118} $line>
            <SubAxis marks={["100.00", "72.88", "18.64"]} low={color.red} />
            <Plot>
              <RsiChart />
            </Plot>
            <SubAxis end marks={["100.00", "72.88", "18.64"]} low={color.red} />
          </Pane>
          <Watermark>
            <WeiboMark />
            @股海美人鱼-安乐
          </Watermark>
        </PaneGroup>

        <PaneHeader $inset={-6} $gap={14}>
          <PaneTitle>
            <Chevron />
            大单净量
          </PaneTitle>
          <span>--</span>
          <Push>
            <SettingsButton />
          </Push>
        </PaneHeader>
        <Pane $height={116}>
          <SubAxis marks={["0.10", "0.03", "-0.10"]} low={color.green} />
          <Plot>
            <svg viewBox="0 0 240 348" preserveAspectRatio="none" aria-hidden="true">
              <GridLines rows={[115, 232, 346]} top={0} bottom={346} />
            </svg>
            <LockedArea>
              <LevelMark>L2</LevelMark>
              大单净量数据需Level2权限
            </LockedArea>
          </Plot>
          <SubAxis end marks={["0.10", "0.03", "-0.10"]} low={color.green} />
        </Pane>
        <TimeAxis>
          {["09:30", "10:00", "10:30", "11:00", "11:30", "13:30", "14:00", "14:30", "15:00"].map((t) => (
            <span key={t}>{t}</span>
          ))}
        </TimeAxis>

        <IndicatorBar>
          <Indicator $width={124} $first $last>超级盘口</Indicator>
          <Indicator $width={68} $first>量比</Indicator>
          <Indicator $width={96}>MACD</Indicator>
          <Indicator $width={82}>KDJ</Indicator>
          <Indicator $width={82} $on>RSI</Indicator>
          <Indicator $width={122} $on>大单净量</Indicator>
          <Indicator $width={122}>
            高抛低吸<Badge>L2</Badge>
          </Indicator>
          <Indicator $width={124} $last>成交对比</Indicator>
        </IndicatorBar>

        <TabBar $top>
          <PanelToggle aria-label="底部栏">
            <PanelIcon side="bottom" />
          </PanelToggle>
          <Tab $width={162} $active>新闻资讯</Tab>
          {["关联股票", "持股基金", "关联期商", "快捷交易", "股市便签"].map((name) => (
            <Tab key={name} $width={164}>
              {name}
            </Tab>
          ))}
        </TabBar>

        <News>
          <NewsColumn $ruled>
            <NewsItems items={latest} inset={-17} label={115} />
          </NewsColumn>
          <NewsColumn>
            <NewsHead>
              <h2>大事提醒</h2>
              <a href="#events">查看全部</a>
            </NewsHead>
            <NewsItems items={events} inset={1} label={159} />
            <NewsHead>
              <h2>公告研报</h2>
              <a href="#notices">查看全部</a>
            </NewsHead>
            <NewsItems items={notices} inset={1} label={115} />
          </NewsColumn>
        </News>
      </Main>

      <Side>
        <Quote>
          <QuoteName>
            金麒麟<span>603586</span>
          </QuoteName>
          <QuotePrice>
            <strong>18.91↑</strong>
            <span>+0.10</span>
            <span>+0.53%</span>
          </QuotePrice>
          <QuoteActions>
            <WatchButton>
              <svg width="18" height="2" viewBox="0 0 18 2" aria-hidden="true">
                <path d="M0 1h18" stroke="currentColor" strokeWidth="2" />
              </svg>
              自选
            </WatchButton>
            <Sector href="#sector">
              汽车零部件<span>-1.03%</span>
            </Sector>
          </QuoteActions>
        </Quote>
        <TabBar>
          <Tab $width={197} $large $active>盘口</Tab>
          <Tab $width={197} $large>推荐</Tab>
          <Tab $width={197} $large>论股堂</Tab>
        </TabBar>

        <Orders>
          <OrderTable $tint>
            <colgroup>
              <col width="129" />
              <col width="90" />
              <col />
            </colgroup>
            <tbody>
              {bids.map(([level, price, size]) => (
                <tr key={level}>
                  <td>{level}</td>
                  <td>
                    <Rise>{price}</Rise>
                  </td>
                  <td>{size}</td>
                </tr>
              ))}
            </tbody>
          </OrderTable>
          <Trades>
            <OrderTable>
              <colgroup>
                <col width="126" />
                <col width="96" />
                <col />
              </colgroup>
              <tbody>
                {trades.map((price, i) => (
                  <tr key={i}>
                    <td>13:49</td>
                    <td>
                      <Rise>{price}</Rise>
                    </td>
                    <td>
                      {i === 4 && (
                        <svg width="18" height="12" viewBox="0 0 18 12" aria-hidden="true">
                          <path d="M1 6l8-5 8 5-8 5z" fill="none" stroke={color.green} strokeWidth="2" />
                        </svg>
                      )}
                    </td>
                  </tr>
                ))}
              </tbody>
            </OrderTable>
          </Trades>
        </Orders>

        <SectionTitle>行情数据</SectionTitle>
        <Stats>
          {stats.map(([name, value, tone], i) => (
            <Stat key={name} $clipped={i % 3 === 2}>
              <dt>
                {name.replace("TTM", "")}
                {name.endsWith("TTM") && <sup>TTM</sup>}
              </dt>
              <StatValue $tone={tone}>{value}</StatValue>
            </Stat>
          ))}
        </Stats>

        <SectionTitle>所属板块：6个</SectionTitle>
        <Boards>
          <colgroup>
            <col width="170" />
            <col width="156" />
            <col width="134" />
            <col />
          </colgroup>
          <thead>
            <tr>
              <th>名称</th>
              <th>成分股数</th>
              <th>
                <SortButton>
                  涨幅%
                  <Chevron width={18} />
                </SortButton>
              </th>
              <th>类别</th>
            </tr>
          </thead>
          <tbody>
            {boards.map((row) => (
              <tr key={row[0]}>
                {row.map((cell, i) => (
                  <td key={i}>{cell}</td>
                ))}
              </tr>
            ))}
          </tbody>
        </Boards>

        <SectionTitle>资金统计</SectionTitle>
        <Funds>
          <p>
            今日资金统计（万元）：主力流入 <FundValue $tone={color.red}>2390.0</FundValue>
          </p>
          <FundGrid>
            <Donut />
            <div>
              <p>
                主力流出 <FundValue $tone={color.green}>3128.5</FundValue>
              </p>
              <p>
                主力净流入 <FundValue $tone={color.green}>-738.5</FundValue>
              </p>
              <FlowChart>
                {flows.map((f) => (
                  <Flow key={f.label} {...f} />
                ))}
              </FlowChart>
            </div>
          </FundGrid>
        </Funds>
      </Side>
    </Shell>
  );
}
